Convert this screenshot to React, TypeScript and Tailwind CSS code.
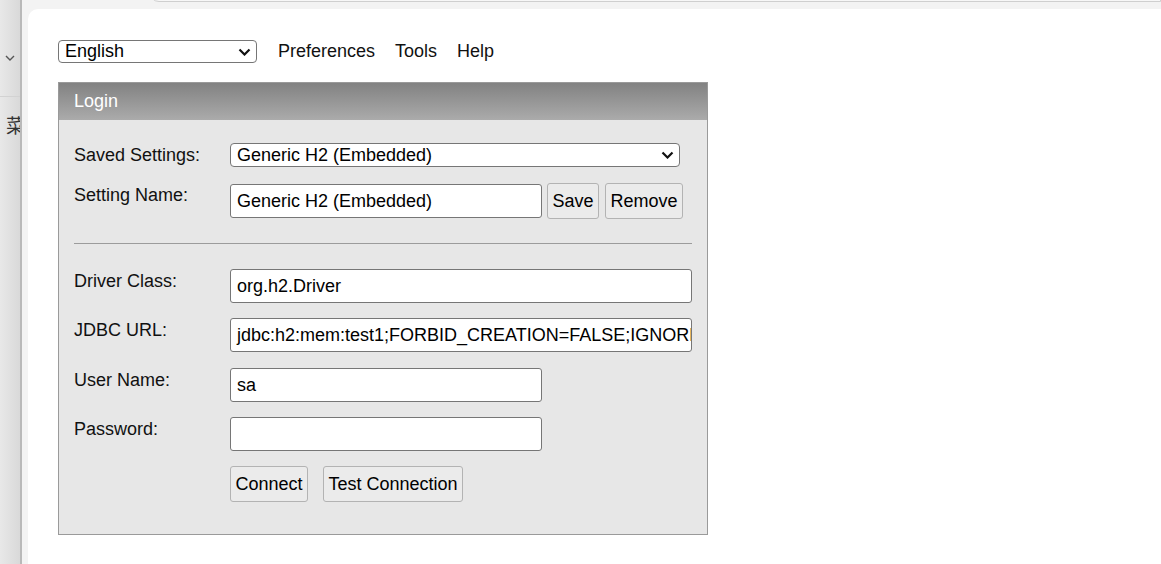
import React from "react";

const Chevron = () => (
  <svg width="13" height="8" viewBox="0 0 13 8" className="shrink-0">
    <path d="M1.5 1.5 L6.5 6.5 L11.5 1.5" fill="none" stroke="#111" strokeWidth="2.2" />
  </svg>
);

const FakeSelect = ({ value, className }: { value: string; className?: string }) => (
  <div
    className={`flex items-center justify-between bg-white border border-[#767676] rounded-[4px] pl-[6px] pr-[5px] text-[18px] leading-[21px] text-black ${className}`}
  >
    <span>{value}</span>
    <Chevron />
  </div>
);

const Input = ({ value, className }: { value?: string; className?: string }) => (
  <div
    className={`flex items-center bg-white border border-[#767676] rounded-[3px] px-[6px] h-[34px] text-[18px] text-black overflow-hidden whitespace-nowrap ${className}`}
  >
    {value}
  </div>
);

const Btn = ({ label, className }: { label: string; className?: string }) => (
  <button
    className={`h-[36px] px-0 whitespace-nowrap bg-[#ebebeb] border border-[#b3b3b3] rounded-[3px] text-[18px] text-black ${className}`}
  >
    {label}
  </button>
);

const Label = ({ text }: { text: string }) => (
  <div className="w-[156px] shrink-0 pt-[1px] text-[18px] leading-[22px] text-[#111]">{text}</div>
);

export default function App() {
  return (
    <div className="flex h-[564px] w-full overflow-hidden bg-[#f3f3f3] font-['Liberation_Sans','Noto_Sans_CJK_SC',sans-serif]">
      {/* browser side strip */}
      <div className="w-[20px] shrink-0 flex flex-col bg-gradient-to-r from-[#e8e8e8] to-[#d9d9d9] overflow-hidden">
        <div className="h-[97px] border-b border-[#d2d2d2] flex items-start justify-center pt-[55px]">
          <svg width="10" height="7" viewBox="0 0 10 7">
            <path d="M1 1 L5 5 L9 1" fill="none" stroke="#555" strokeWidth="1.4" />
          </svg>
        </div>
        <div className="pt-[20px] pl-[6px] text-[19px] leading-[20px] text-[#333] whitespace-nowrap">菜</div>
      </div>
      <div className="w-[2px] shrink-0 bg-[#b9b9b9]" />
      <div className="flex-1 flex flex-col min-w-0">
        <div className="h-[9px] shrink-0 relative">
          <div className="absolute left-[127px] right-0 top-[-10px] h-[12px] border border-[#cfcfcf] rounded-bl-[10px] bg-[#f7f7f7]" />
        </div>
        <div className="flex-1 ml-[6px] bg-white rounded-tl-[10px] pl-[30px] pt-[31px]">
          {/* top nav */}
          <div className="flex items-center h-[23px] text-[18px] text-[#111]">
            <FakeSelect value="English" className="w-[199px] h-[23px]" />
            <span className="ml-[21px]">Preferences</span>
            <span className="ml-[20px]">Tools</span>
            <span className="ml-[20px]">Help</span>
          </div>

          {/* login box */}
          <div className="mt-[19px] w-[650px] border border-[#9a9a9a] bg-[#e7e7e7]">
            <div className="h-[37px] flex items-center pl-[15px] bg-gradient-to-b from-[#828282] to-[#ababab] text-white text-[18px]">
              Login
            </div>
            <div className="px-[15px] pt-[23px] pb-[32px]">
              <div className="flex items-start">
                <Label text="Saved Settings:" />
                <FakeSelect value="Generic H2 (Embedded)" className="w-[450px] h-[24px]" />
              </div>
              <div className="flex items-start mt-[16px]">
                <Label text="Setting Name:" />
                <Input value="Generic H2 (Embedded)" className="w-[312px] mt-[1px]" />
                <Btn label="Save" className="ml-[5px] w-[52px]" />
                <Btn label="Remove" className="ml-[6px] w-[78px]" />
              </div>

              <div className="mt-[24px] h-px bg-[#9c9c9c]" />

              <div className="flex items-start mt-[25px]">
                <Label text="Driver Class:" />
                <Input value="org.h2.Driver" className="w-[462px]" />
              </div>
              <div className="flex items-start mt-[15px]">
                <Label text="JDBC URL:" />
                <Input value="jdbc:h2:mem:test1;FORBID_CREATION=FALSE;IGNORE_UNKNOWN_SETTINGS=TRUE" className="w-[462px]" />
              </div>
              <div className="flex items-start mt-[16px]">
                <Label text="User Name:" />
                <Input value="sa" className="w-[312px]" />
              </div>
              <div className="flex items-start mt-[15px]">
                <Label text="Password:" />
                <Input className="w-[312px]" />
              </div>
              <div className="flex items-start mt-[15px] pl-[156px]">
                <Btn label="Connect" className="w-[78px]" />
                <Btn label="Test Connection" className="ml-[15px] w-[140px]" />
              </div>
            </div>
          </div>
        </div>
      </div>
    </div>
  );
}
